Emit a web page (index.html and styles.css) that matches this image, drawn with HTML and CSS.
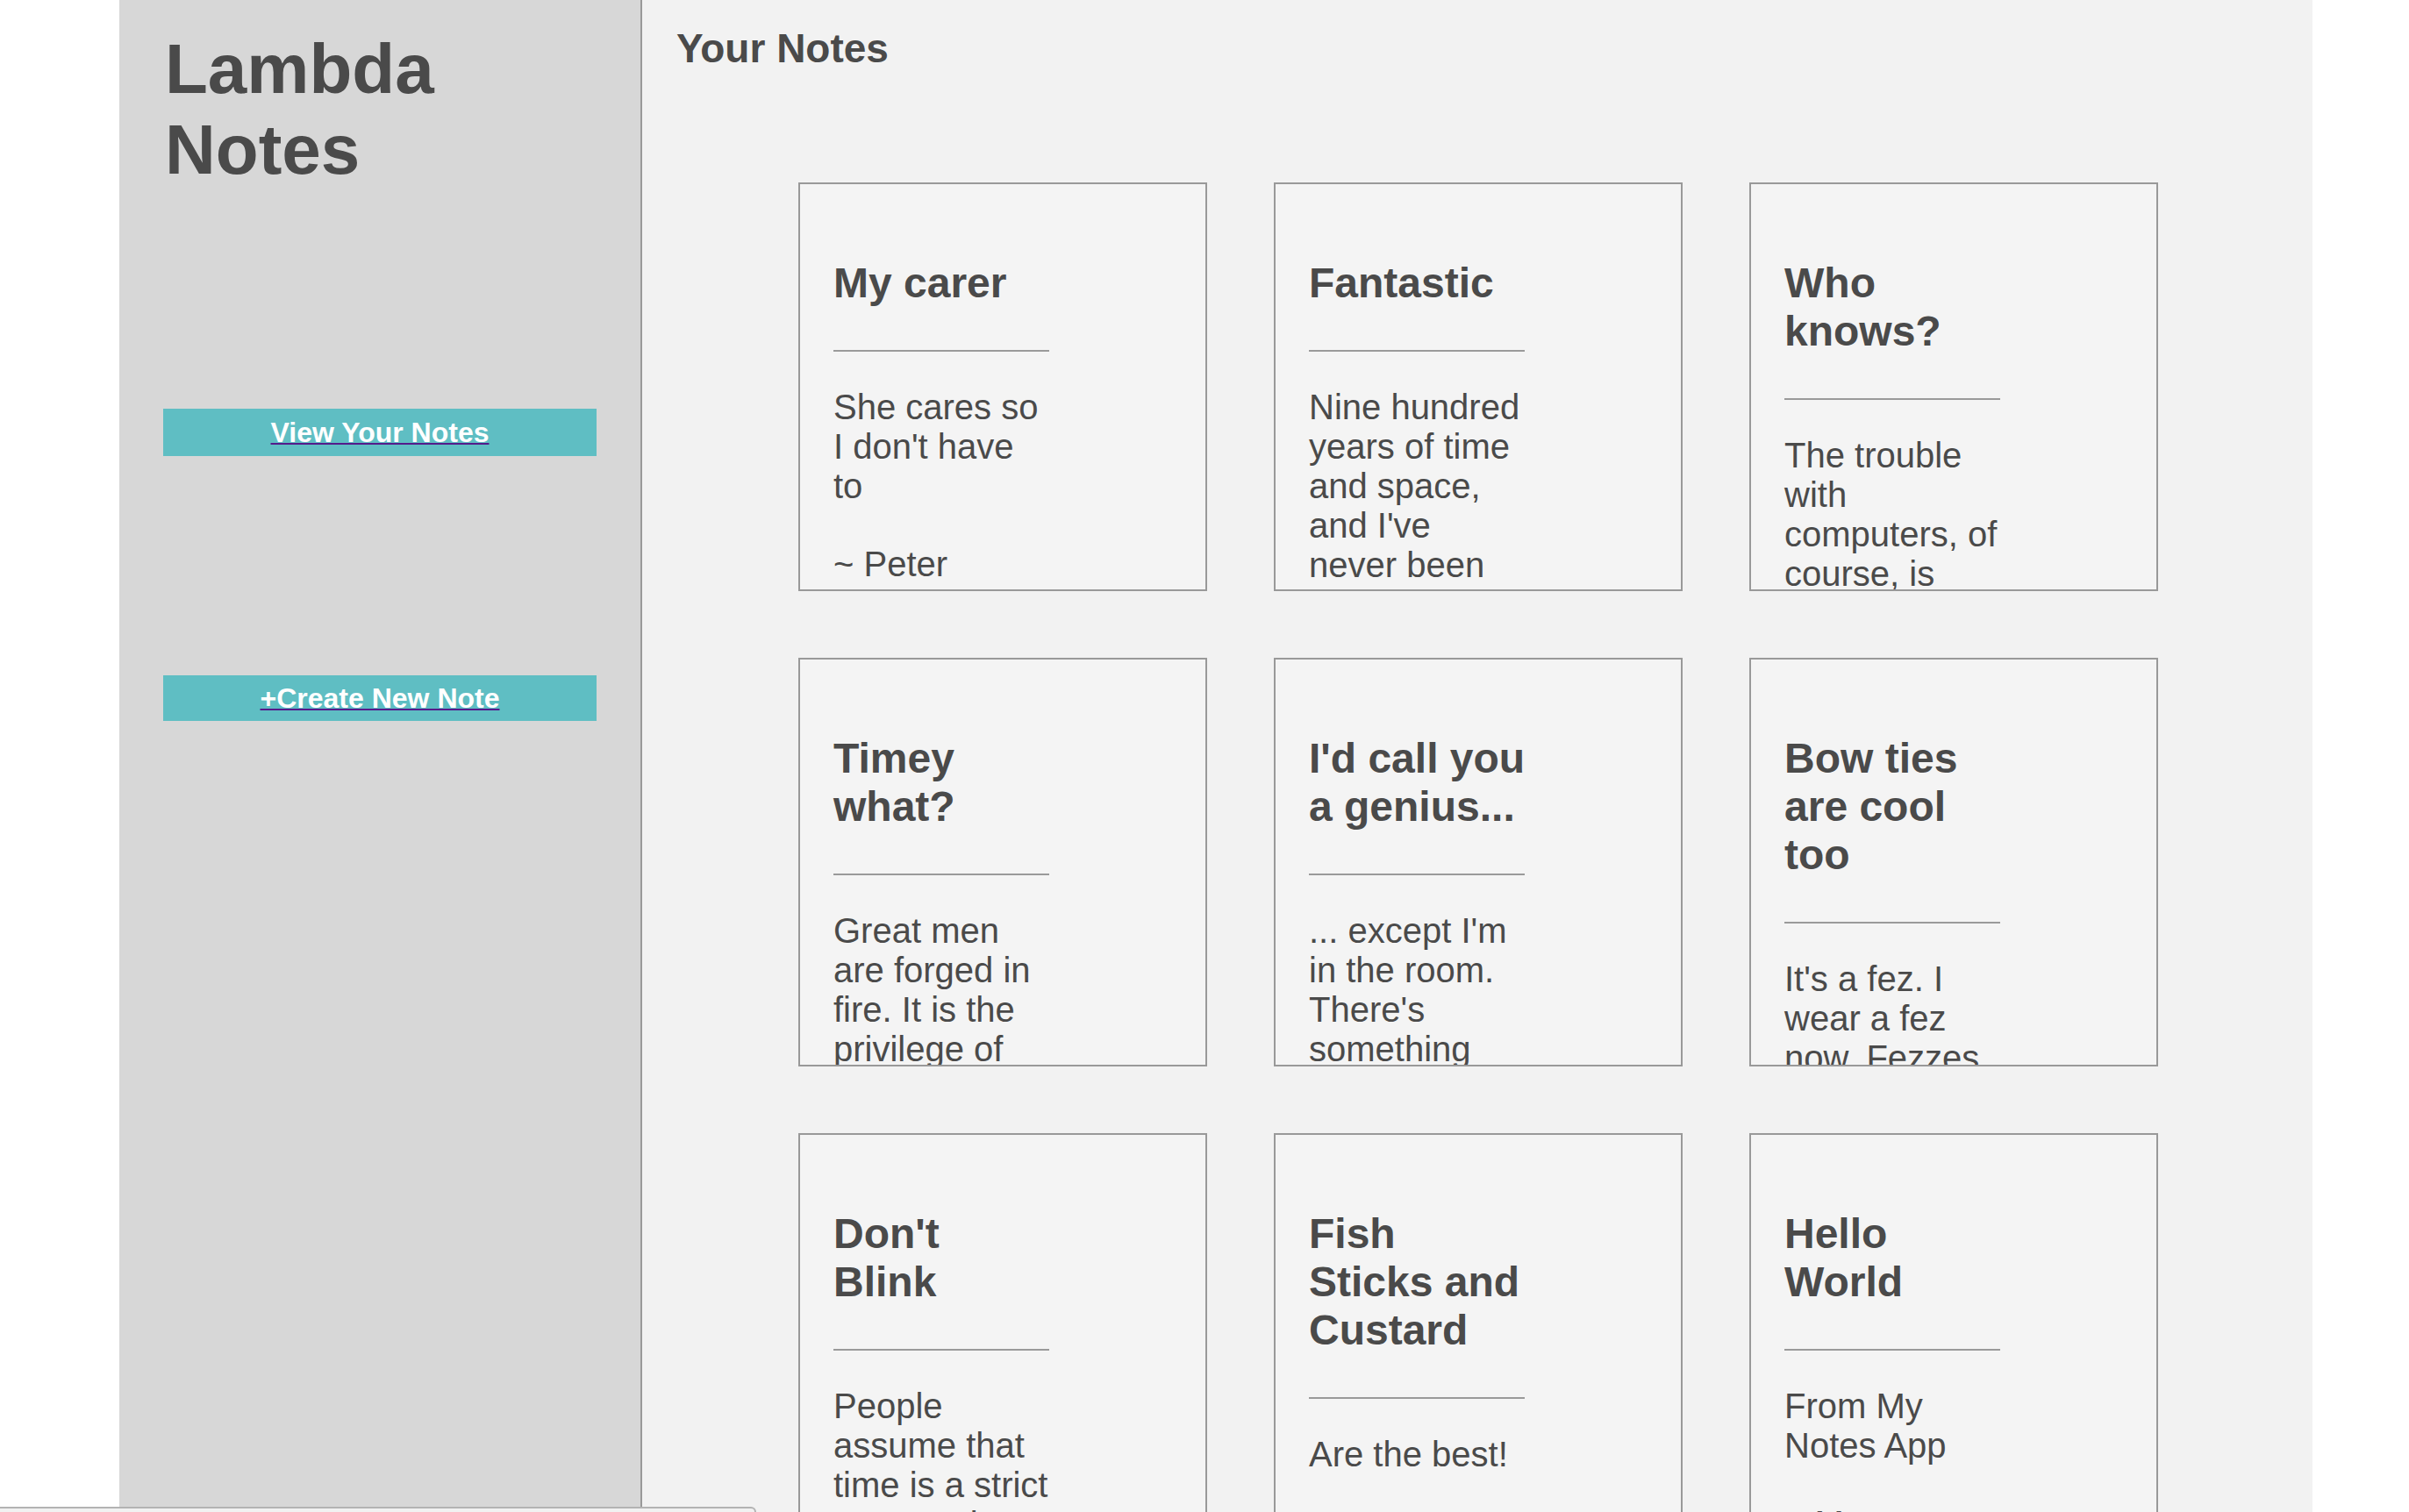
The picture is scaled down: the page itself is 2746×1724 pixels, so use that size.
FILE: index.html
```html
<!DOCTYPE html>
<html lang="en">
<head>
<meta charset="utf-8">
<title>Lambda Notes</title>
<link rel="stylesheet" href="styles.css">
</head>
<body>
<div class="app">
  <aside class="sidebar">
    <h1 class="brand">Lambda Notes</h1>
    <a class="nav-btn nav-view" href="#">View Your Notes</a>
    <a class="nav-btn nav-create" href="#">+Create New Note</a>
  </aside>
  <main class="main">
    <h2 class="page-title">Your Notes</h2>
    <div class="notes-grid">
      <article class="note-card">
        <div class="note-content">
          <h3 class="note-title">My carer</h3>
          <hr class="note-rule">
          <div class="note-body"><p>She cares so I don't have to</p><p>~ Peter</p></div>
        </div>
      </article>
      <article class="note-card">
        <div class="note-content">
          <h3 class="note-title">Fantastic</h3>
          <hr class="note-rule">
          <div class="note-body"><p>Nine hundred years of time and space, and I've never been slapped by someone's mother.</p></div>
        </div>
      </article>
      <article class="note-card">
        <div class="note-content">
          <h3 class="note-title">Who knows?</h3>
          <hr class="note-rule">
          <div class="note-body"><p>The trouble with computers, of course, is they're very sophisticated idiots.</p></div>
        </div>
      </article>
      <article class="note-card">
        <div class="note-content">
          <h3 class="note-title">Timey what?</h3>
          <hr class="note-rule">
          <div class="note-body"><p>Great men are forged in fire. It is the privilege of lesser men to light the flame.</p></div>
        </div>
      </article>
      <article class="note-card">
        <div class="note-content">
          <h3 class="note-title">I'd call you a genius...</h3>
          <hr class="note-rule">
          <div class="note-body"><p>... except I'm in the room. There's something very clever going on here.</p></div>
        </div>
      </article>
      <article class="note-card">
        <div class="note-content">
          <h3 class="note-title">Bow ties are cool too</h3>
          <hr class="note-rule">
          <div class="note-body"><p>It's a fez. I wear a fez now. Fezzes are cool.</p></div>
        </div>
      </article>
      <article class="note-card">
        <div class="note-content">
          <h3 class="note-title">Don't Blink</h3>
          <hr class="note-rule">
          <div class="note-body"><p>People assume that time is a strict progression of cause to effect.</p></div>
        </div>
      </article>
      <article class="note-card">
        <div class="note-content">
          <h3 class="note-title">Fish Sticks and Custard</h3>
          <hr class="note-rule">
          <div class="note-body"><p>Are the best!</p></div>
        </div>
      </article>
      <article class="note-card">
        <div class="note-content">
          <h3 class="note-title">Hello World</h3>
          <hr class="note-rule">
          <div class="note-body"><p>From My Notes App</p><p>~ Me</p></div>
        </div>
      </article>
    </div>
  </main>
</div>
<div class="status-bubble"></div>
</body>
</html>
```

FILE: styles.css
```css
html, body {
  margin: 0;
  padding: 0;
  height: 100%;
  overflow: hidden;
  background: #ffffff;
}

body {
  font-family: "Liberation Sans", Arial, Helvetica, sans-serif;
  color: #4a4a4a;
}

.app {
  display: flex;
  height: 100vh;
  width: 2500px;
  margin-left: 136px;
  overflow: hidden;
}

.sidebar {
  width: 596px;
  flex: none;
  box-sizing: border-box;
  padding: 0 50px;
  background: #d7d7d7;
  border-right: 2px solid #999999;
  display: flex;
  flex-direction: column;
}

.brand {
  margin: 33px 0 0 2px;
  font-size: 80px;
  font-weight: bold;
  line-height: normal;
  color: #4a4a4a;
}

.nav-btn {
  display: flex;
  align-items: center;
  justify-content: center;
  height: 54px;
  background: #5fbec3;
  color: #ffffff;
  font-size: 32px;
  font-weight: bold;
  text-decoration: underline;
  text-decoration-color: #551a8b;
  text-decoration-thickness: 2px;
}

.nav-view {
  margin-top: 249px;
}

.nav-create {
  margin-top: 250px;
  height: 52px;
}

.main {
  flex: 1;
  background: #f2f2f2;
  padding: 28px 0 0 39px;
  box-sizing: border-box;
}

.page-title {
  margin: 0;
  font-size: 46px;
  font-weight: bold;
  line-height: normal;
  color: #4a4a4a;
}

.notes-grid {
  display: grid;
  grid-template-columns: repeat(3, 466px);
  column-gap: 76px;
  row-gap: 76px;
  justify-content: center;
  margin: 126px 0 0 -37px;
}

.note-card {
  box-sizing: border-box;
  width: 466px;
  height: 466px;
  border: 2px solid #999999;
  background: #f4f4f4;
  overflow: hidden;
  padding: 85px 0 0 38px;
}

.note-content {
  width: 248px;
}

.note-title {
  margin: 0 0 49px;
  font-size: 48px;
  font-weight: bold;
  line-height: normal;
  color: #4a4a4a;
}

.note-rule {
  margin: 0;
  width: 246px;
  height: 0;
  border: none;
  border-top: 2px solid #9a9a9a;
}

.note-body {
  font-size: 40px;
  line-height: normal;
  color: #4a4a4a;
}

.note-body p {
  margin: 41px 0 0;
}

.note-body p + p {
  margin-top: 44px;
}

.status-bubble {
  position: fixed;
  left: 0;
  bottom: 0;
  width: 860px;
  height: 4px;
  background: #f1f1f1;
  border-top: 2px solid #b3b3b3;
  border-right: 2px solid #b3b3b3;
  border-top-right-radius: 6px;
}
```
